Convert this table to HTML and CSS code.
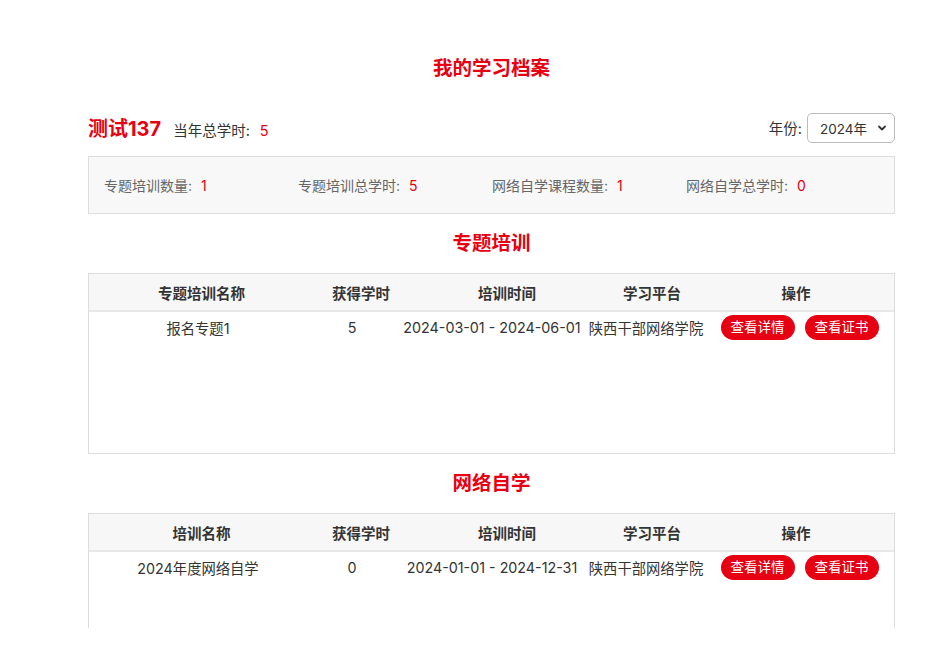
FILE: index.html
```html
<!DOCTYPE html>
<html lang="zh-CN">
<head>
<meta charset="utf-8">
<title>我的学习档案</title>
<link rel="stylesheet" href="styles.css">
</head>
<body>
<div class="page">
  <div class="container">
    <h1 class="title">我的学习档案</h1>
    <div class="user-row">
      <div class="user-info">
        <span class="user-name">测试137</span>
        <span class="user-total">当年总学时:<span class="red">5</span></span>
      </div>
      <div class="year-filter">
        <span class="year-label">年份:</span>
        <div class="select">
          <span>2024年</span>
          <svg width="10" height="10" viewBox="0 0 10 10"><path d="M2 3.5 L5 6.5 L8 3.5" fill="none" stroke="#333" stroke-width="1.8" stroke-linecap="round" stroke-linejoin="round"/></svg>
        </div>
      </div>
    </div>
    <div class="stats">
      <div class="stat">专题培训数量:<span class="red">1</span></div>
      <div class="stat">专题培训总学时:<span class="red">5</span></div>
      <div class="stat">网络自学课程数量:<span class="red">1</span></div>
      <div class="stat">网络自学总学时:<span class="red">0</span></div>
    </div>

    <h2 class="section-title">专题培训</h2>
    <div class="table-box">
      <table class="head-table">
        <colgroup>
          <col class="h1"><col class="h2"><col class="h3"><col class="h4"><col class="h5">
        </colgroup>
        <tr><th>专题培训名称</th><th>获得学时</th><th>培训时间</th><th>学习平台</th><th>操作</th></tr>
      </table>
      <table class="body-table">
        <colgroup>
          <col class="b1"><col class="b2"><col class="b3"><col class="b4"><col class="b5">
        </colgroup>
        <tr>
          <td>报名专题1</td><td>5</td><td>2024-03-01 - 2024-06-01</td><td>陕西干部网络学院</td>
          <td><span class="btn">查看详情</span><span class="btn">查看证书</span></td>
        </tr>
      </table>
    </div>

    <h2 class="section-title">网络自学</h2>
    <div class="table-box">
      <table class="head-table">
        <colgroup>
          <col class="h1"><col class="h2"><col class="h3"><col class="h4"><col class="h5">
        </colgroup>
        <tr><th>培训名称</th><th>获得学时</th><th>培训时间</th><th>学习平台</th><th>操作</th></tr>
      </table>
      <table class="body-table">
        <colgroup>
          <col class="b1"><col class="b2"><col class="b3"><col class="b4"><col class="b5">
        </colgroup>
        <tr>
          <td>2024年度网络自学</td><td>0</td><td>2024-01-01 - 2024-12-31</td><td>陕西干部网络学院</td>
          <td><span class="btn">查看详情</span><span class="btn">查看证书</span></td>
        </tr>
      </table>
    </div>
  </div>
</div>
</body>
</html>
```

FILE: styles.css
```css
* { box-sizing: border-box; }
html, body { margin: 0; padding: 0; background: #fff; }
body {
  font-family: "Inter", "Noto Sans CJK SC", sans-serif;
  color: #333;
  font-size: 14.5px;
}
.page {
  height: 628px;
  overflow: hidden;
}
.container {
  width: 807px;
  margin-left: 88px;
  padding-top: 54px;
}
.red { color: #e60012; margin-left: 6px; }
.title {
  margin: 0;
  text-align: center;
  color: #e60012;
  font-size: 19.5px;
  font-weight: bold;
  line-height: 28px;
}
.user-row {
  display: flex;
  justify-content: space-between;
  align-items: center;
  margin-top: 31px;
  height: 29px;
}
.user-info { display: flex; align-items: baseline; }
.user-name {
  color: #e60012;
  font-size: 20px;
  font-weight: bold;
  margin-right: 12px;
}
.user-total { font-size: 14.5px; color: #333; }
.user-total .red { margin-left: 10px; }
.year-filter { display: flex; align-items: center; }
.year-label { font-size: 14.5px; color: #333; margin-right: 5px; }
.select {
  width: 88px;
  height: 30px;
  border: 1px solid #bbb;
  border-radius: 5px;
  display: flex;
  align-items: center;
  justify-content: space-between;
  padding: 0 7px 0 12px;
  font-size: 13.5px;
  color: #333;
}
.stats {
  margin-top: 14px;
  height: 58px;
  background: #f8f8f8;
  border: 1px solid #ddd;
  display: flex;
  align-items: center;
  padding-left: 15px;
}
.stat {
  width: 194px;
  font-size: 14px;
  color: #666;
}
.stat .red { margin-left: 9px; }
.section-title {
  margin: 0;
  text-align: center;
  color: #e60012;
  font-size: 19.5px;
  font-weight: bold;
  line-height: 26px;
  padding-top: 16px;
  padding-bottom: 17px;
}
.table-box {
  border: 1px solid #ddd;
  height: 181px;
}
.head-table, .body-table {
  width: 100%;
  border-collapse: collapse;
  table-layout: fixed;
}
.h1 { width: 225px; }
.h2 { width: 94px; }
.h3 { width: 198px; }
.h4 { width: 92px; }
.h5 { width: auto; }
.b1 { width: 218px; }
.b2 { width: 90px; }
.b3 { width: 190px; }
.b4 { width: 118px; }
.b5 { width: auto; }
.head-table th {
  background: #f7f7f7;
  height: 37px;
  font-size: 14.5px;
  font-weight: bold;
  color: #333;
  text-align: center;
  border-bottom: 2px solid #e8e8e8;
  padding: 0;
}
.body-table td {
  text-align: center;
  font-size: 14.3px;
  color: #333;
  height: 30px;
  padding: 0;
  white-space: nowrap;
}
.btn {
  display: inline-block;
  background: #e60012;
  color: #fff;
  font-size: 13.5px;
  line-height: 25px;
  height: 25px;
  padding: 0 10px;
  border-radius: 13px;
  margin: 0 5px;
}
```
